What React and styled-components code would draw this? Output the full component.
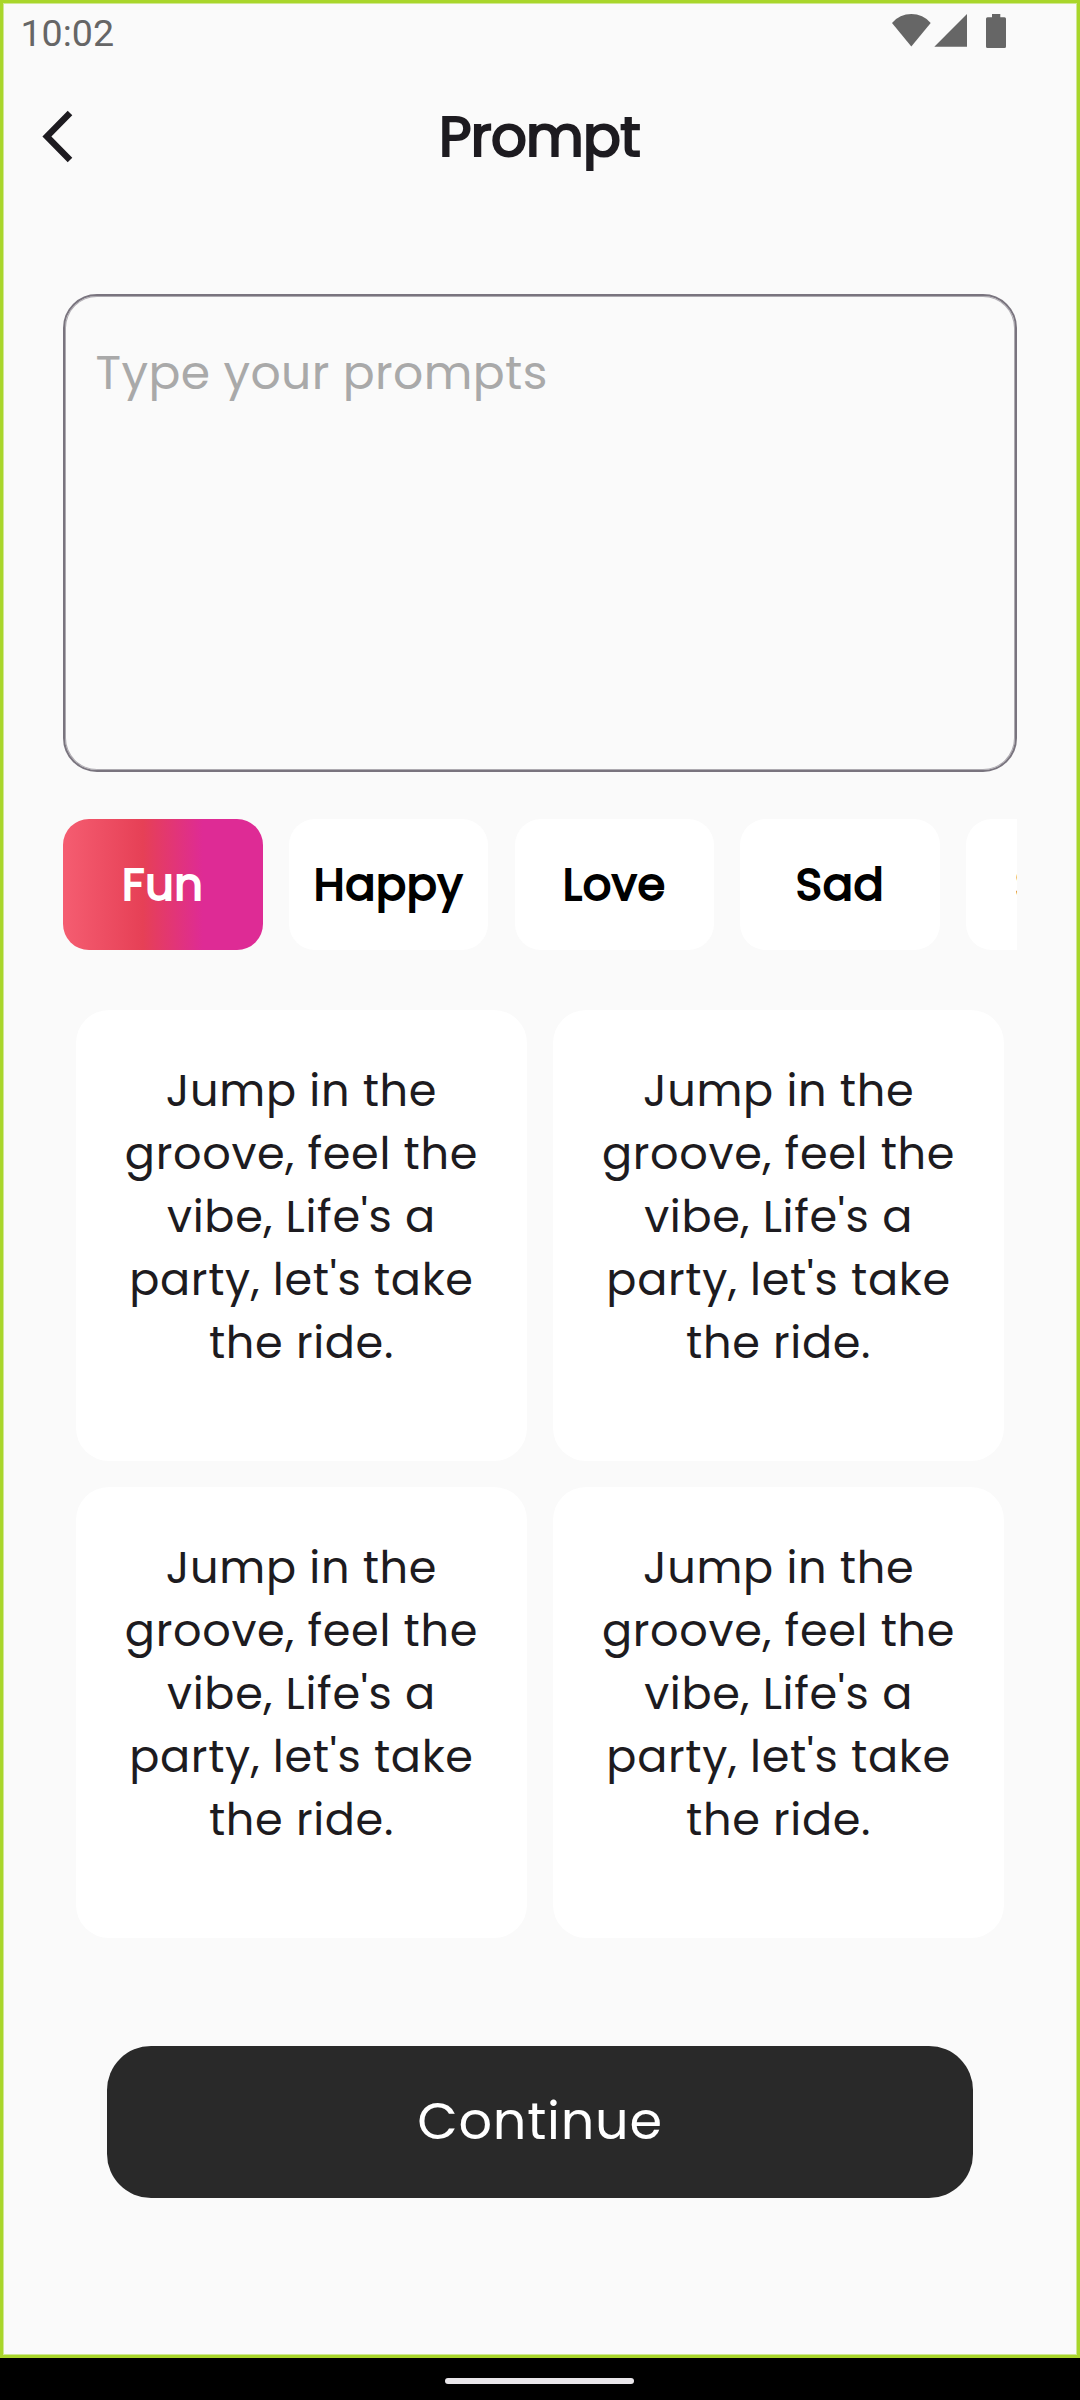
import React from 'react';
import styled, { createGlobalStyle } from 'styled-components';

const GlobalStyle = createGlobalStyle`
  * { box-sizing: border-box; }
  body { margin: 0; background: #000; }
`;

const Device = styled.div`
  width: 1080px;
  height: 2400px;
  display: flex;
  flex-direction: column;
  background: #000;
  font-family: Poppins, Inter, sans-serif;
  color: #1d1b20;
  overflow: hidden;
`;

const Screen = styled.main`
  height: 2358px;
  display: flex;
  flex-direction: column;
  border: 3px solid #a9d62b;
  box-shadow: inset 0 0 0 1px #d0e894;
  background: #fafafa;
`;

const StatusBar = styled.div`
  height: 60px;
  padding: 0 70px 0 17.5px;
  display: flex;
  justify-content: space-between;
  align-items: flex-start;
`;

const Clock = styled.span`
  font: 400 37.6px/44px Roboto, sans-serif;
  color: #666;
  padding-top: 8px;
`;

const StatusIcons = styled.svg`
  width: 116px;
  height: 36px;
  margin-top: 10px;
  fill: #666;
`;

const Header = styled.header`
  height: 146px;
  display: grid;
  grid-template-columns: 100px 1fr 100px;
  align-items: center;
`;

const BackButton = styled.button`
  width: 48px;
  height: 60px;
  margin-left: 33px;
  padding: 0;
  border: 0;
  background: none;
  color: #1d1b20;
`;

const Chevron = styled.svg`
  display: block;
  width: 48px;
  height: 60px;
  fill: none;
  stroke: currentColor;
  stroke-width: 6.4;
`;

const Title = styled.h1`
  margin: 0;
  padding: 2px 1px 0 0;
  text-align: center;
  font-size: 56px;
  font-weight: 400;
  line-height: 74px;
  letter-spacing: -0.7px;
  -webkit-text-stroke: 2.2px currentColor;
`;

const Content = styled.div`
  padding: 85px 60px 0;
  display: flex;
  flex-direction: column;
`;

const PromptField = styled.div`
  height: 478px;
  border: 2px solid #79747e;
  box-shadow: inset 0 0 0 1px rgba(121, 116, 126, 0.6);
  border-radius: 34px;
  padding: 44px 30.5px;
  font-size: 47.25px;
  line-height: 66px;
  letter-spacing: 0.39px;
  color: #a9a9a9;
`;

const Chips = styled.div`
  margin-top: 47px;
  display: flex;
  gap: 26.25px;
  overflow: hidden;
`;

const Chip = styled.button`
  flex: 0 0 199.5px;
  height: 131px;
  border: 0;
  padding: 1px 0 0;
  border-radius: 26px;
  font: 400 44.625px/62px Poppins, Inter, sans-serif;
  letter-spacing: 0.6px;
  -webkit-text-stroke: 1.8px currentColor;
  color: ${(p) => (p.$active ? '#fff' : '#000')};
  background: ${(p) =>
    p.$active ? 'linear-gradient(90deg, #f55d71 0%, #e64056 40%, #de2b95 70%)' : '#fff'};

  &:last-child {
    padding-left: 3px;
  }
`;

const CardGrid = styled.div`
  margin: 60px 13px 0;
  display: grid;
  grid-template-columns: 1fr 1fr;
  grid-auto-rows: 450.8px;
  gap: 26.25px;
`;

const Card = styled.article`
  border-radius: 33px;
  background: #fff;
  padding: 49px 40px 0;
  font-size: 44.625px;
  line-height: 63px;
  letter-spacing: 0.656px;
  text-align: center;
`;

const ContinueButton = styled.button`
  margin: 108px 44px 0;
  height: 152.4px;
  border: 0;
  border-radius: 44px;
  padding: 0 0 2px;
  background: #292929;
  color: #fff;
  font: 400 52.5px/74px Poppins, Inter, sans-serif;
  letter-spacing: 0.75px;
`;

const NavBar = styled.div`
  flex: 1;
  display: flex;
  justify-content: center;
  padding: 20px 1px 0 0;
`;

const HomePill = styled.div`
  width: 189px;
  height: 6px;
  border-radius: 3px;
  background: #e9e6ea;
`;

const moods = ['Fun', 'Happy', 'Love', 'Sad', 'Slow'];
const lyric = "Jump in the groove, feel the vibe, Life's a party, let's take the ride.";
const suggestions = [lyric, lyric, lyric, lyric];

export default function App() {
  return (
    <Device>
      <GlobalStyle />
      <Screen>
        <StatusBar>
          <Clock>10:02</Clock>
          <StatusIcons viewBox="0 0 116 36" aria-hidden="true">
            <path d="M1 10A25.3 25.3 0 0 1 39.7 10L20.3 33.5Z" />
            <path d="M43.3 33.7L76 1V33.7Z" />
            <path d="M101 1h8.3v3.3H113.5a1.5 1.5 0 0 1 1.5 1.5V33.5a1.5 1.5 0 0 1-1.5 1.5H96.5a1.5 1.5 0 0 1-1.5-1.5V5.8a1.5 1.5 0 0 1 1.5-1.5H101Z" />
          </StatusIcons>
        </StatusBar>
        <Header>
          <BackButton aria-label="Back">
            <Chevron viewBox="0 0 48 60">
              <path d="M34 7L10.9 30.5L34 54" />
            </Chevron>
          </BackButton>
          <Title>Prompt</Title>
        </Header>
        <Content>
          <PromptField>Type your prompts</PromptField>
          <Chips>
            {moods.map((mood, i) => (
              <Chip key={mood} $active={i === 0}>
                {mood}
              </Chip>
            ))}
          </Chips>
          <CardGrid>
            {suggestions.map((text, i) => (
              <Card key={i}>{text}</Card>
            ))}
          </CardGrid>
          <ContinueButton>Continue</ContinueButton>
        </Content>
      </Screen>
      <NavBar>
        <HomePill />
      </NavBar>
    </Device>
  );
}
